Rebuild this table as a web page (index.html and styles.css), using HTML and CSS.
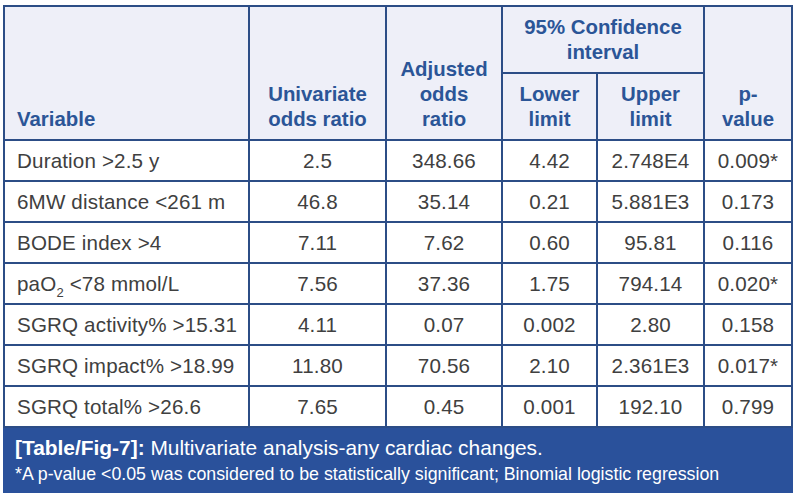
FILE: index.html
```html
<!DOCTYPE html>
<html>
<head>
<meta charset="utf-8">
<link rel="stylesheet" href="styles.css">
</head>
<body>
<div class="figure">
  <table class="data">
    <colgroup>
      <col class="c1"><col class="c2"><col class="c3"><col class="c4"><col class="c5"><col class="c6">
    </colgroup>
    <thead>
      <tr class="h1">
        <th rowspan="2" class="left">Variable</th>
        <th rowspan="2">Univariate<br>odds ratio</th>
        <th rowspan="2">Adjusted<br>odds<br>ratio</th>
        <th colspan="2">95% Confidence<br>interval</th>
        <th rowspan="2">p-<br>value</th>
      </tr>
      <tr class="h2">
        <th>Lower<br>limit</th>
        <th>Upper<br>limit</th>
      </tr>
    </thead>
    <tbody>
      <tr><td class="left">Duration &gt;2.5 y</td><td>2.5</td><td>348.66</td><td>4.42</td><td>2.748E4</td><td>0.009*</td></tr>
      <tr><td class="left">6MW distance &lt;261 m</td><td>46.8</td><td>35.14</td><td>0.21</td><td>5.881E3</td><td>0.173</td></tr>
      <tr><td class="left">BODE index &gt;4</td><td>7.11</td><td>7.62</td><td>0.60</td><td>95.81</td><td>0.116</td></tr>
      <tr><td class="left">paO<sub>2</sub> &lt;78 mmol/L</td><td>7.56</td><td>37.36</td><td>1.75</td><td>794.14</td><td>0.020*</td></tr>
      <tr><td class="left">SGRQ activity% &gt;15.31</td><td>4.11</td><td>0.07</td><td>0.002</td><td>2.80</td><td>0.158</td></tr>
      <tr><td class="left">SGRQ impact% &gt;18.99</td><td>11.80</td><td>70.56</td><td>2.10</td><td>2.361E3</td><td>0.017*</td></tr>
      <tr><td class="left">SGRQ total% &gt;26.6</td><td>7.65</td><td>0.45</td><td>0.001</td><td>192.10</td><td>0.799</td></tr>
    </tbody>
  </table>
  <div class="caption">
    <p class="title"><b>[Table/Fig-7]:</b> Multivariate analysis-any cardiac changes.</p>
    <p class="note">*A p-value &lt;0.05 was considered to be statistically significant; Binomial logistic regression</p>
  </div>
</div>
</body>
</html>
```
FILE: styles.css
```css
html, body {
  margin: 0;
  padding: 0;
  background: #ffffff;
}
body {
  font-family: "Liberation Sans", Arial, sans-serif;
}
.figure {
  padding: 5px 0 0 3px;
  width: 790px;
}
.data {
  width: 790px;
  border-collapse: collapse;
  table-layout: fixed;
  border: 2px solid #2c4d86;
}
.c1 { width: 245px; }
.c2 { width: 137px; }
.c3 { width: 116px; }
.c4 { width: 95px; }
.c5 { width: 107px; }
.c6 { width: 88px; }
.data th, .data td {
  border: 2px solid #2c4d86;
  padding: 0 4px;
  text-align: center;
}
.data th {
  background: #eeeff8;
  color: #2b5597;
  font-weight: bold;
  font-size: 20.4px;
  line-height: 25px;
  vertical-align: bottom;
  padding-bottom: 7px;
}
.data .h1 th { height: 58px; }
.data .h2 th { height: 58px; }
.data td {
  color: #404040;
  font-size: 20.6px;
  letter-spacing: 0.15px;
  line-height: 24px;
  height: 39px;
  padding-top: 0;
  padding-bottom: 0;
  vertical-align: middle;
}
.data .left {
  text-align: left;
  padding-left: 12px;
}
.data sub {
  font-size: 13px;
  line-height: 0;
  vertical-align: -6px;
}
.caption {
  background: #2a519b;
  color: #ffffff;
  padding: 8px 12px 5px 12px;
  height: 52px;
}
.caption p {
  margin: 0;
  white-space: nowrap;
}
.caption .title {
  font-size: 20.9px;
  line-height: 24px;
}
.caption .note {
  font-size: 17.8px;
  line-height: 28px;
}
```
